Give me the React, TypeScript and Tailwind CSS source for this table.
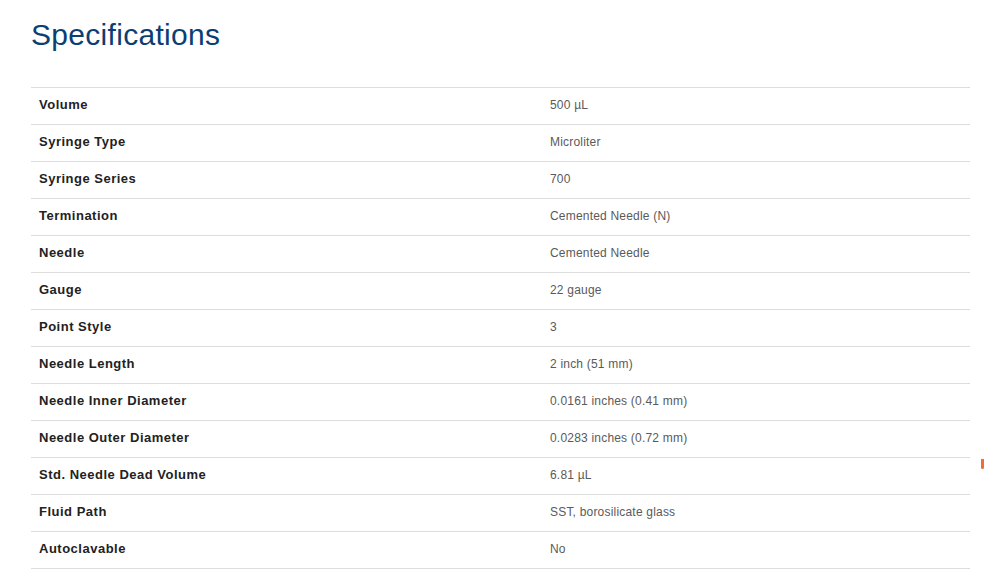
import React from 'react';

const specs: [string, string][] = [
  ['Volume', '500 µL'],
  ['Syringe Type', 'Microliter'],
  ['Syringe Series', '700'],
  ['Termination', 'Cemented Needle (N)'],
  ['Needle', 'Cemented Needle'],
  ['Gauge', '22 gauge'],
  ['Point Style', '3'],
  ['Needle Length', '2 inch (51 mm)'],
  ['Needle Inner Diameter', '0.0161 inches (0.41 mm)'],
  ['Needle Outer Diameter', '0.0283 inches (0.72 mm)'],
  ['Std. Needle Dead Volume', '6.81 µL'],
  ['Fluid Path', 'SST, borosilicate glass'],
  ['Autoclavable', 'No'],
];

const App: React.FC = () => {
  return (
    <div className="relative w-[984px] h-[571px] overflow-hidden bg-white font-['Liberation_Sans',Arial,sans-serif]">
      <div className="pl-[31px] w-[970px]">
        <h2 className="pt-[17px] h-[87px] text-[30px] leading-[36px] tracking-[0.3px] text-[#0b3f74]">Specifications</h2>
        <div className="border-t border-[#dddddd]">
          {specs.map(([label, value]) => (
            <div key={label} className="flex items-center h-[37px] pb-[2px] border-b border-[#dddddd]">
              <div className="w-[519px] pl-[8px] text-[13px] font-bold tracking-[0.5px] text-[#222222]">{label}</div>
              <div className="text-[12px] tracking-[0.2px] text-[#5a5a5a]">{value}</div>
            </div>
          ))}
        </div>
      </div>
      {/* small orange marker at right edge */}
      <div className="absolute left-[981px] top-[459px] w-[3px] h-[10px] rounded-b-full bg-[#f26b3a]" />
    </div>
  );
};

export default App;
